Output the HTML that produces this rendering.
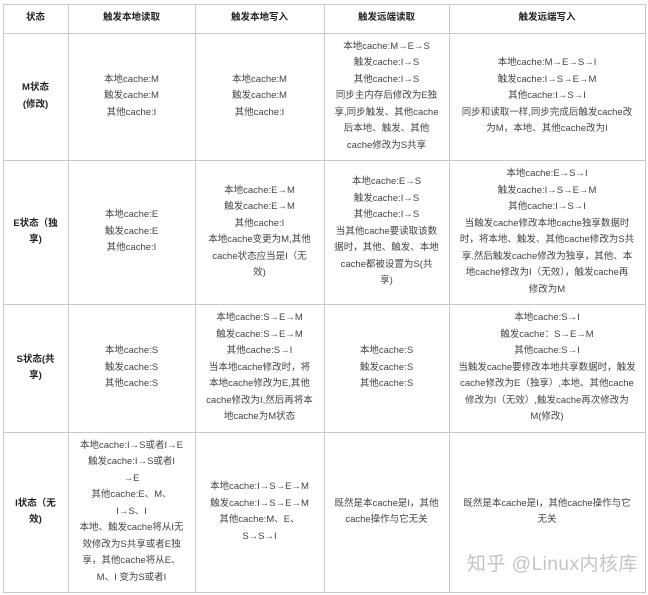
<!DOCTYPE html>
<html><head><meta charset="utf-8"><style>
html,body{margin:0;padding:0;background:#fff;width:648px;height:595px;overflow:hidden}
body{font-family:"Liberation Sans","Noto Sans CJK SC",sans-serif;color:#444;font-size:9.5px}
.c{position:absolute;display:flex;align-items:center;justify-content:center;text-align:center;line-height:16.5px;box-sizing:border-box;padding:0;white-space:nowrap}
.h{position:absolute;background:#c8c8c8}
b{font-weight:bold;color:#222}
.wm{position:absolute;left:467px;top:549px;font-size:19px;color:#c4c4c4;letter-spacing:0.5px;white-space:nowrap}
</style></head><body>
<div class="h" style="left:3px;top:4px;width:643px;height:1px"></div>
<div class="h" style="left:3px;top:33px;width:643px;height:1px"></div>
<div class="h" style="left:3px;top:160px;width:643px;height:1px"></div>
<div class="h" style="left:3px;top:304px;width:643px;height:1px"></div>
<div class="h" style="left:3px;top:432px;width:643px;height:1px"></div>
<div class="h" style="left:3px;top:592px;width:643px;height:1px"></div>
<div class="h" style="left:3px;top:4px;width:1px;height:589px"></div>
<div class="h" style="left:68px;top:4px;width:1px;height:589px"></div>
<div class="h" style="left:195px;top:4px;width:1px;height:589px"></div>
<div class="h" style="left:324px;top:4px;width:1px;height:589px"></div>
<div class="h" style="left:449px;top:4px;width:1px;height:589px"></div>
<div class="h" style="left:645px;top:4px;width:1px;height:589px"></div>

<div class="c" style="left:3px;top:4px;width:65px;height:29px"><b>状态</b></div>
<div class="c" style="left:68px;top:4px;width:127px;height:29px"><b>触发本地读取</b></div>
<div class="c" style="left:195px;top:4px;width:129px;height:29px"><b>触发本地写入</b></div>
<div class="c" style="left:324px;top:4px;width:125px;height:29px"><b>触发远端读取</b></div>
<div class="c" style="left:449px;top:4px;width:196px;height:29px"><b>触发远端写入</b></div>

<div class="c" style="left:3px;top:33px;width:65px;height:127px"><b>M状态<br>(修改)</b></div>
<div class="c" style="left:68px;top:33px;width:127px;height:127px">本地cache:M<br>触发cache:M<br>其他cache:I</div>
<div class="c" style="left:195px;top:33px;width:129px;height:127px">本地cache:M<br>触发cache:M<br>其他cache:I</div>
<div class="c" style="left:324px;top:33px;width:125px;height:127px">本地cache:M→E→S<br>触发cache:I→S<br>其他cache:I→S<br>同步主内存后修改为E独<br>享,同步触发、其他cache<br>后本地、触发、其他<br>cache修改为S共享</div>
<div class="c" style="left:449px;top:33px;width:196px;height:127px">本地cache:M→E→S→I<br>触发cache:I→S→E→M<br>其他cache:I→S→I<br>同步和读取一样,同步完成后触发cache改<br>为M，本地、其他cache改为I</div>

<div class="c" style="left:3px;top:160px;width:65px;height:144px"><b>E状态（独<br>享)</b></div>
<div class="c" style="left:68px;top:160px;width:127px;height:144px">本地cache:E<br>触发cache:E<br>其他cache:I</div>
<div class="c" style="left:195px;top:160px;width:129px;height:144px">本地cache:E→M<br>触发cache:E→M<br>其他cache:I<br>本地cache变更为M,其他<br>cache状态应当是I（无<br>效)</div>
<div class="c" style="left:324px;top:160px;width:125px;height:144px">本地cache:E→S<br>触发cache:I→S<br>其他cache:I→S<br>当其他cache要读取该数<br>据时，其他、触发、本地<br>cache都被设置为S(共<br>享)</div>
<div class="c" style="left:449px;top:160px;width:196px;height:144px">本地cache:E→S→I<br>触发cache:I→S→E→M<br>其他cache:I→S→I<br>当触发cache修改本地cache独享数据时<br>时，将本地、触发、其他cache修改为S共<br>享.然后触发cache修改为独享，其他、本<br>地cache修改为I（无效），触发cache再<br>修改为M</div>

<div class="c" style="left:3px;top:304px;width:65px;height:128px"><b>S状态(共<br>享)</b></div>
<div class="c" style="left:68px;top:304px;width:127px;height:128px">本地cache:S<br>触发cache:S<br>其他cache:S</div>
<div class="c" style="left:195px;top:304px;width:129px;height:128px">本地cache:S→E→M<br>触发cache:S→E→M<br>其他cache:S→I<br>当本地cache修改时，将<br>本地cache修改为E,其他<br>cache修改为I,然后再将本<br>地cache为M状态</div>
<div class="c" style="left:324px;top:304px;width:125px;height:128px">本地cache:S<br>触发cache:S<br>其他cache:S</div>
<div class="c" style="left:449px;top:304px;width:196px;height:128px">本地cache:S→I<br>触发cache：S→E→M<br>其他cache:S→I<br>当触发cache要修改本地共享数据时，触发<br>cache修改为E（独享）,本地、其他cache<br>修改为I（无效）,触发cache再次修改为<br>M(修改)</div>

<div class="c" style="left:3px;top:432px;width:65px;height:160px"><b>I状态（无<br>效)</b></div>
<div class="c" style="left:68px;top:432px;width:127px;height:160px">本地cache:I→S或者I→E<br>触发cache:I→S或者I<br>→E<br>其他cache:E、M、<br>I→S、I<br>本地、触发cache将从I无<br>效修改为S共享或者E独<br>享，其他cache将从E、<br>M、I 变为S或者I</div>
<div class="c" style="left:195px;top:432px;width:129px;height:160px">本地cache:I→S→E→M<br>触发cache:I→S→E→M<br>其他cache:M、E、<br>S→S→I</div>
<div class="c" style="left:324px;top:432px;width:125px;height:160px">既然是本cache是I，其他<br>cache操作与它无关</div>
<div class="c" style="left:449px;top:432px;width:196px;height:160px">既然是本cache是I，其他cache操作与它<br>无关</div>

<div class="wm">知乎 @Linux内核库</div>
</body></html>
